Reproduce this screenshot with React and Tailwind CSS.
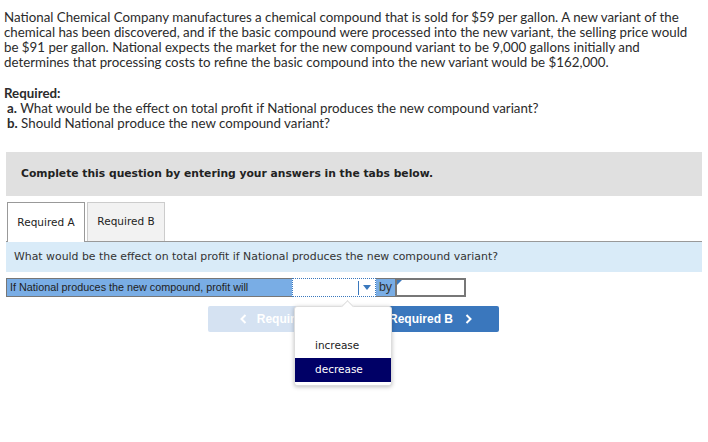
import React from "react";

export default function App() {
  return (
    <div className="relative w-[708px] h-[442px] bg-white overflow-hidden">
      <div className="px-[4px] pt-[10px] font-['Lato',sans-serif] text-[13.3px] leading-[15px] text-[#2b2b2b] whitespace-nowrap">
        <p>
          National Chemical Company manufactures a chemical compound that is sold for $59 per gallon. A new variant of the<br />
          chemical has been discovered, and if the basic compound were processed into the new variant, the selling price would<br />
          be $91 per gallon. National expects the market for the new compound variant to be 9,000 gallons initially and<br />
          determines that processing costs to refine the basic compound into the new variant would be $162,000.
        </p>
        <p className="mt-[16px] font-bold">Required:</p>
        <p className="pl-[3px]"><span className="font-bold">a.</span> What would be the effect on total profit if National produces the new compound variant?</p>
        <p className="pl-[3px]"><span className="font-bold">b.</span> Should National produce the new compound variant?</p>
      </div>

      <div className="mx-[6px] mt-[21px] h-[44px] bg-[#e0e0e0] flex items-center pl-[15px] font-['DejaVu_Sans',sans-serif] text-[10.75px] font-bold text-[#222]">
        Complete this question by entering your answers in the tabs below.
      </div>

      <div className="mx-[6px] mt-[6px] flex gap-[2px] pl-[1px] font-['DejaVu_Sans',sans-serif] text-[10.5px] text-[#222]">
        <div className="w-[78px] h-[40px] bg-white border border-b-0 border-[#999] flex items-center justify-center -mb-[1px] relative z-10">
          Required A
        </div>
        <div className="w-[78px] h-[39px] bg-[#f2f2f2] border border-b-0 border-[#ccc] flex items-center justify-center">
          Required B
        </div>
      </div>

      <div className="mx-[6px] h-[31px] border-t border-[#999] bg-[#d9ebf8] flex items-center pl-[8px] font-['DejaVu_Sans',sans-serif] text-[10.9px] text-[#333]">
        What would be the effect on total profit if National produces the new compound variant?
      </div>

      <div className="ml-[6px] mt-[6px] flex h-[19px] font-['Liberation_Sans',sans-serif] text-[10.8px] text-[#222]">
        <div className="w-[286px] h-full bg-[#79ade5] border border-r-0 border-[#777] flex items-center pl-[3px]">
          If National produces the new compound, profit will
        </div>
        <div className="w-[84px] h-full bg-white border border-dotted border-[#3a78bd] flex items-center justify-end">
          <div className="h-[14px] w-px bg-[#3a78bd]"></div>
          <div className="w-[16px] flex items-center justify-center">
            <svg width="8" height="5" viewBox="0 0 8 5"><path d="M0 0 L8 0 L4 5 Z" fill="#3a78bd" /></svg>
          </div>
        </div>
        <div className="w-[19px] h-full bg-[#79ade5] border-y border-[#777] flex items-center justify-center text-[12.5px] text-[#333]">
          by
        </div>
        <div className="relative w-[71px] h-full bg-white border-2 border-[#777]">
          <svg className="absolute left-0 top-0" width="5" height="5" viewBox="0 0 5 5"><path d="M0 0 L5 0 L0 5 Z" fill="#3a78bd" /></svg>
        </div>
      </div>

      <div className="ml-[208px] mt-[9px] flex gap-[4px] font-['Liberation_Sans',sans-serif] text-[12px] font-bold text-white">
        <div className="w-[144px] h-[26px] rounded-[2px] bg-[#d5e2f2] flex items-center justify-center gap-[10px]">
          <svg width="7" height="10" viewBox="0 0 7 10"><path d="M5.5 1 L1.5 5 L5.5 9" stroke="white" strokeWidth="2" fill="none" /></svg>
          <span>Required A</span>
        </div>
        <div className="w-[143px] h-[26px] rounded-[2px] bg-[#3a77bd] flex items-center justify-center gap-[12px] pl-[6px]">
          <span>Required B</span>
          <svg width="7" height="10" viewBox="0 0 7 10"><path d="M1.5 1 L5.5 5 L1.5 9" stroke="white" strokeWidth="2" fill="none" /></svg>
        </div>
      </div>

      <div className="absolute left-[294px] top-[306px] w-[98px] h-[80px] bg-white rounded-[3px] border border-[#ddd] shadow-[0_1px_4px_rgba(0,0,0,0.25)] font-['DejaVu_Sans',sans-serif] text-[10.5px]">
        <div className="absolute left-[48px] -top-[5px] w-[9px] h-[9px] bg-white border-l border-t border-[#ddd] rotate-45"></div>
        <div className="relative mt-[4px] h-[23px]"></div>
        <div className="h-[24px] flex items-center pl-[20px] text-[#222]">increase</div>
        <div className="h-[24px] flex items-center pl-[20px] bg-[#000066] text-white">decrease</div>
      </div>
    </div>
  );
}
